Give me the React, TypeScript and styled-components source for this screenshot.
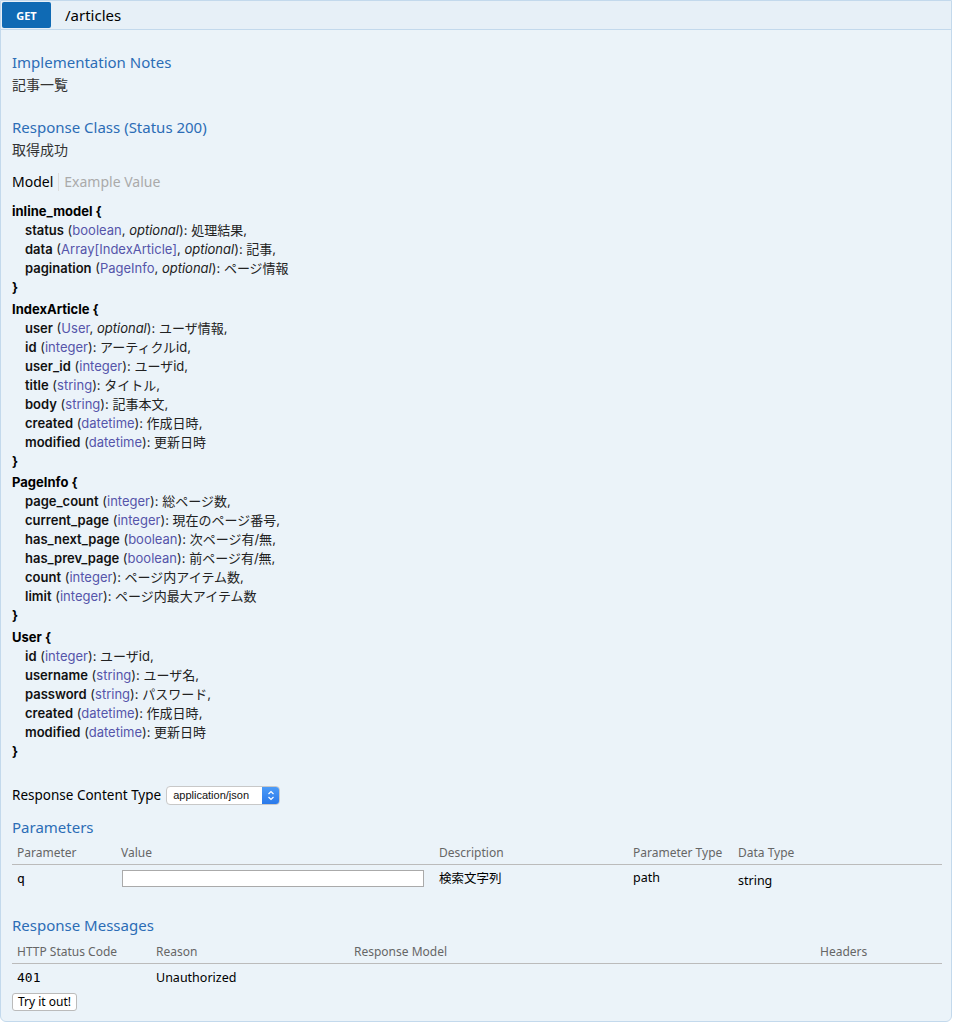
import React from 'react';
import styled, { createGlobalStyle } from 'styled-components';

const GlobalStyle = createGlobalStyle`
  html, body {
    margin: 0;
    padding: 0;
    background: #fff;
  }
  body {
    font-family: "Noto Sans", "Noto Sans CJK JP", sans-serif;
    font-size: 13px;
    color: #333;
  }
`;

type Prop = { name: string; type: string; optional?: boolean; desc: string };
type Model = { name: string; props: Prop[] };

const models: Model[] = [
  {
    name: 'inline_model',
    props: [
      { name: 'status', type: 'boolean', optional: true, desc: '処理結果' },
      { name: 'data', type: 'Array[IndexArticle]', optional: true, desc: '記事' },
      { name: 'pagination', type: 'PageInfo', optional: true, desc: 'ページ情報' },
    ],
  },
  {
    name: 'IndexArticle',
    props: [
      { name: 'user', type: 'User', optional: true, desc: 'ユーザ情報' },
      { name: 'id', type: 'integer', desc: 'アーティクルid' },
      { name: 'user_id', type: 'integer', desc: 'ユーザid' },
      { name: 'title', type: 'string', desc: 'タイトル' },
      { name: 'body', type: 'string', desc: '記事本文' },
      { name: 'created', type: 'datetime', desc: '作成日時' },
      { name: 'modified', type: 'datetime', desc: '更新日時' },
    ],
  },
  {
    name: 'PageInfo',
    props: [
      { name: 'page_count', type: 'integer', desc: '総ページ数' },
      { name: 'current_page', type: 'integer', desc: '現在のページ番号' },
      { name: 'has_next_page', type: 'boolean', desc: '次ページ有/無' },
      { name: 'has_prev_page', type: 'boolean', desc: '前ページ有/無' },
      { name: 'count', type: 'integer', desc: 'ページ内アイテム数' },
      { name: 'limit', type: 'integer', desc: 'ページ内最大アイテム数' },
    ],
  },
  {
    name: 'User',
    props: [
      { name: 'id', type: 'integer', desc: 'ユーザid' },
      { name: 'username', type: 'string', desc: 'ユーザ名' },
      { name: 'password', type: 'string', desc: 'パスワード' },
      { name: 'created', type: 'datetime', desc: '作成日時' },
      { name: 'modified', type: 'datetime', desc: '更新日時' },
    ],
  },
];

const Operation = styled.div`
  width: 952px;
  border: 1px solid #c3d9ec;
  border-radius: 0 0 6px 6px;
  background: #ebf3f9;
  box-sizing: border-box;
`;

const Heading = styled.div`
  display: flex;
  align-items: center;
  height: 28px;
  background: #e7f0f7;
  border-bottom: 1px solid #c3d9ec;
`;

const Method = styled.span`
  display: flex;
  align-items: center;
  justify-content: center;
  width: 49px;
  height: 26px;
  margin-left: 1px;
  background: #0f6ab4;
  border-radius: 2px;
  color: #fff;
  font-family: "Noto Sans", sans-serif;
  font-size: 11px;
  font-weight: 700;
`;

const Path = styled.span`
  margin-left: 14px;
  font-family: "Noto Sans", sans-serif;
  font-size: 15px;
  color: #000;
`;

const Content = styled.div`
  padding: 21px 10px 10px 11px;
`;

const Title = styled.h4<{ $top?: number }>`
  margin: ${(p) => p.$top ?? 0}px 0 0;
  font-family: "Noto Sans", sans-serif;
  font-size: 15px;
  font-weight: 400;
  color: #2c6db6;
  line-height: 22px;
`;

const Note = styled.div`
  font-family: "Noto Sans", "Noto Sans CJK JP", sans-serif;
  font-size: 14px;
  line-height: 24px;
  color: #333;
`;

const Tabs = styled.div`
  display: flex;
  align-items: center;
  margin-top: 11px;
  font-size: 14px;
  line-height: 18px;
`;

const Tab = styled.span<{ $active?: boolean }>`
  padding: 0 5px 0 0;
  color: ${(p) => (p.$active ? '#000' : '#aaa')};
  & + & {
    padding-left: 5px;
    border-left: 1px solid #ddd;
  }
`;

const Signature = styled.div`
  margin-top: 11px;
  font-family: Inter, "Noto Sans CJK JP", sans-serif;
  font-size: 13px;
  line-height: 19px;
  color: #000;
`;

const ModelBlock = styled.div`
  & + & {
    margin-top: 2.5px;
  }
`;

const ModelName = styled.div`
  font-weight: 700;
`;

const PropLine = styled.div`
  padding-left: 13px;
  color: #222;
`;

const PropName = styled.span`
  font-weight: 600;
  color: #111;
`;

const PropType = styled.span`
  color: #55a;
`;

const Optional = styled.span`
  font-style: italic;
`;

const ContentType = styled.div`
  display: flex;
  align-items: center;
  margin-top: 25px;
  font-family: "Noto Sans", sans-serif;
  font-size: 13.5px;
  color: #000;
`;

const Select = styled.div`
  display: flex;
  align-items: stretch;
  margin-left: 5px;
  width: 114px;
  height: 19px;
  border: 1px solid #c8c8c8;
  border-radius: 4px;
  background: #fff;
  box-sizing: border-box;
  overflow: hidden;
  font-family: "Liberation Sans", sans-serif;
  font-size: 11px;
  color: #111;
`;

const SelectText = styled.span`
  flex: 1;
  display: flex;
  align-items: center;
  padding-left: 6px;
`;

const SelectArrow = styled.span`
  display: flex;
  align-items: center;
  justify-content: center;
  width: 17px;
  background: linear-gradient(#4c9bf7, #2a79ea);
`;

const Table = styled.table<{ $top: number }>`
  width: 930px;
  margin-top: ${(p) => p.$top}px;
  border-collapse: collapse;
  table-layout: fixed;
  font-family: "Noto Sans", "Noto Sans CJK JP", sans-serif;
`;

const Th = styled.th<{ $w?: number }>`
  width: ${(p) => (p.$w ? `${p.$w}px` : 'auto')};
  padding: 0 5px 2px;
  text-align: left;
  font-size: 12px;
  font-weight: 400;
  color: #666;
  line-height: 18px;
  border-bottom: 1px solid #bbb;
`;

const Td = styled.td<{ $mono?: boolean; $drop?: number }>`
  padding: ${(p) => 5 + (p.$drop ?? 0)}px 5px 0;
  vertical-align: top;
  color: #000;
  line-height: 18px;
  font-family: ${(p) => (p.$mono ? '"DejaVu Sans Mono", monospace' : 'inherit')};
  font-size: ${(p) => (p.$mono ? '13px' : '12.5px')};
`;

const Input = styled.input`
  display: block;
  width: 302px;
  height: 17px;
  margin: 0 0 0 1px;
  padding: 0;
  border: 1px solid #aaa;
  background: #fff;
  box-sizing: border-box;
`;

const Button = styled.button`
  display: block;
  margin: 6px 0 0 0;
  height: 18px;
  padding: 0 5px;
  border: 1px solid #bbb;
  border-radius: 3px;
  background: #fff;
  font-family: "Noto Sans", sans-serif;
  font-size: 12px;
  color: #000;
  line-height: 14px;
`;

const ArrowIcon = () => (
  <svg width="8" height="11" viewBox="0 0 8 11">
    <path d="M1.5 4 L4 1.5 L6.5 4 M1.5 7 L4 9.5 L6.5 7" stroke="#fff" strokeWidth="1.2" fill="none" />
  </svg>
);

export default function App() {
  return (
    <>
      <GlobalStyle />
      <Operation>
        <Heading>
          <Method>GET</Method>
          <Path>/articles</Path>
        </Heading>
        <Content>
          <Title>Implementation Notes</Title>
          <Note>記事一覧</Note>
          <Title $top={19}>Response Class (Status 200)</Title>
          <Note>取得成功</Note>
          <Tabs>
            <Tab $active>Model</Tab>
            <Tab>Example Value</Tab>
          </Tabs>
          <Signature>
            {models.map((m) => (
              <ModelBlock key={m.name}>
                <ModelName>{m.name} {'{'}</ModelName>
                {m.props.map((p, i) => (
                  <PropLine key={p.name}>
                    <PropName>{p.name}</PropName> (<PropType>{p.type}</PropType>
                    {p.optional && (
                      <>
                        , <Optional>optional</Optional>
                      </>
                    )}
                    ): {p.desc}
                    {i < m.props.length - 1 ? ',' : ''}
                  </PropLine>
                ))}
                <ModelName>{'}'}</ModelName>
              </ModelBlock>
            ))}
          </Signature>
          <ContentType>
            Response Content Type
            <Select>
              <SelectText>application/json</SelectText>
              <SelectArrow>
                <ArrowIcon />
              </SelectArrow>
            </Select>
          </ContentType>
          <Title $top={11}>Parameters</Title>
          <Table $top={6}>
            <thead>
              <tr>
                <Th $w={94}>Parameter</Th>
                <Th $w={308}>Value</Th>
                <Th $w={184}>Description</Th>
                <Th $w={95}>Parameter Type</Th>
                <Th>Data Type</Th>
              </tr>
            </thead>
            <tbody>
              <tr>
                <Td $mono>q</Td>
                <Td>
                  <Input type="text" />
                </Td>
                <Td>検索文字列</Td>
                <Td $drop={-1}>path</Td>
                <Td $drop={2}>string</Td>
              </tr>
            </tbody>
          </Table>
          <Title $top={24}>Response Messages</Title>
          <Table $top={7}>
            <thead>
              <tr>
                <Th $w={129}>HTTP Status Code</Th>
                <Th $w={188}>Reason</Th>
                <Th $w={456}>Response Model</Th>
                <Th>Headers</Th>
              </tr>
            </thead>
            <tbody>
              <tr>
                <Td $mono>401</Td>
                <Td>Unauthorized</Td>
                <Td />
                <Td />
              </tr>
            </tbody>
          </Table>
          <Button>Try it out!</Button>
        </Content>
      </Operation>
    </>
  );
}
